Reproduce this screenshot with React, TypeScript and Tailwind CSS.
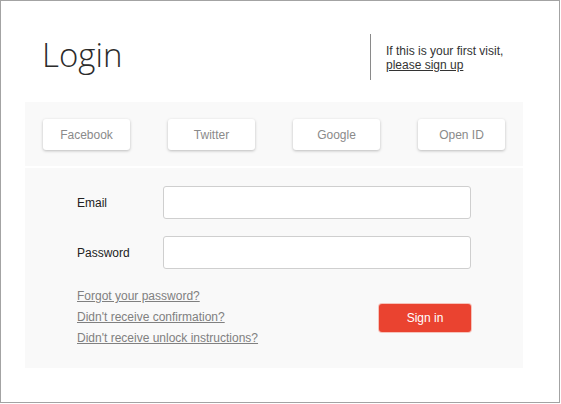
import React from "react";

const socials = ["Facebook", "Twitter", "Google", "Open ID"];

const links = [
  "Forgot your password?",
  "Didn't receive confirmation?",
  "Didn't receive unlock instructions?",
];

const App = () => {
  return (
    <div className="w-[561px] h-[404px] bg-white font-['Liberation_Sans',Arial,sans-serif]">
      <div className="w-[560px] h-[403px] border border-[#a3a3a3]">
        {/* Header */}
        <div className="flex items-start h-[101px] pt-[33px]">
          <h1 className="flex-1 pl-[41px] mt-[4px] text-[33px] leading-none font-light text-[#2b2b2b] font-['Open_Sans',sans-serif]">
            Login
          </h1>
          <div className="flex items-center w-[165px] h-[46px] mr-[24px] border-l border-[#8a8a8a] pl-[15px] text-[12px] leading-[14px] text-[#333]">
            <p className="pt-[2px]">
              If this is your first visit,
              <br />
              <a href="#" className="underline">
                please sign up
              </a>
            </p>
          </div>
        </div>

        {/* Social logins */}
        <div className="ml-[24px] w-[498px] h-[64px] bg-[#f9f9f9] flex items-center justify-between px-[18px]">
          {socials.map((s) => (
            <button
              key={s}
              className="w-[87px] h-[31px] pt-[2px] bg-white rounded-[3px] shadow-[0_1px_3px_rgba(0,0,0,0.25)] text-[12px] text-[#8a8a8a]"
            >
              {s}
            </button>
          ))}
        </div>

        {/* Form */}
        <div className="ml-[24px] mt-[2px] w-[498px] h-[200px] bg-[#f9f9f9] px-[52px] pt-[18px]">
          <div className="flex items-center">
            <label className="w-[86px] text-[12px] text-[#222]">Email</label>
            <input className="w-[308px] h-[33px] bg-white border border-[#cfcfcf] rounded-[3px] outline-none" />
          </div>
          <div className="flex items-center mt-[17px]">
            <label className="w-[86px] text-[12px] text-[#222]">Password</label>
            <input
              type="password"
              className="w-[308px] h-[33px] bg-white border border-[#cfcfcf] rounded-[3px] outline-none"
            />
          </div>
          <div className="flex items-center justify-between mt-[17px]">
            <ul className="text-[12px] leading-[21px] text-[#808080]">
              {links.map((l) => (
                <li key={l}>
                  <a href="#" className="underline">
                    {l}
                  </a>
                </li>
              ))}
            </ul>
            <button className="w-[92px] h-[28px] bg-[#ea4330] rounded-[3px] shadow-[0_0_0_1px_#f6c3bb] text-[12px] text-white">
              Sign in
            </button>
          </div>
        </div>
      </div>
    </div>
  );
};

export default App;
